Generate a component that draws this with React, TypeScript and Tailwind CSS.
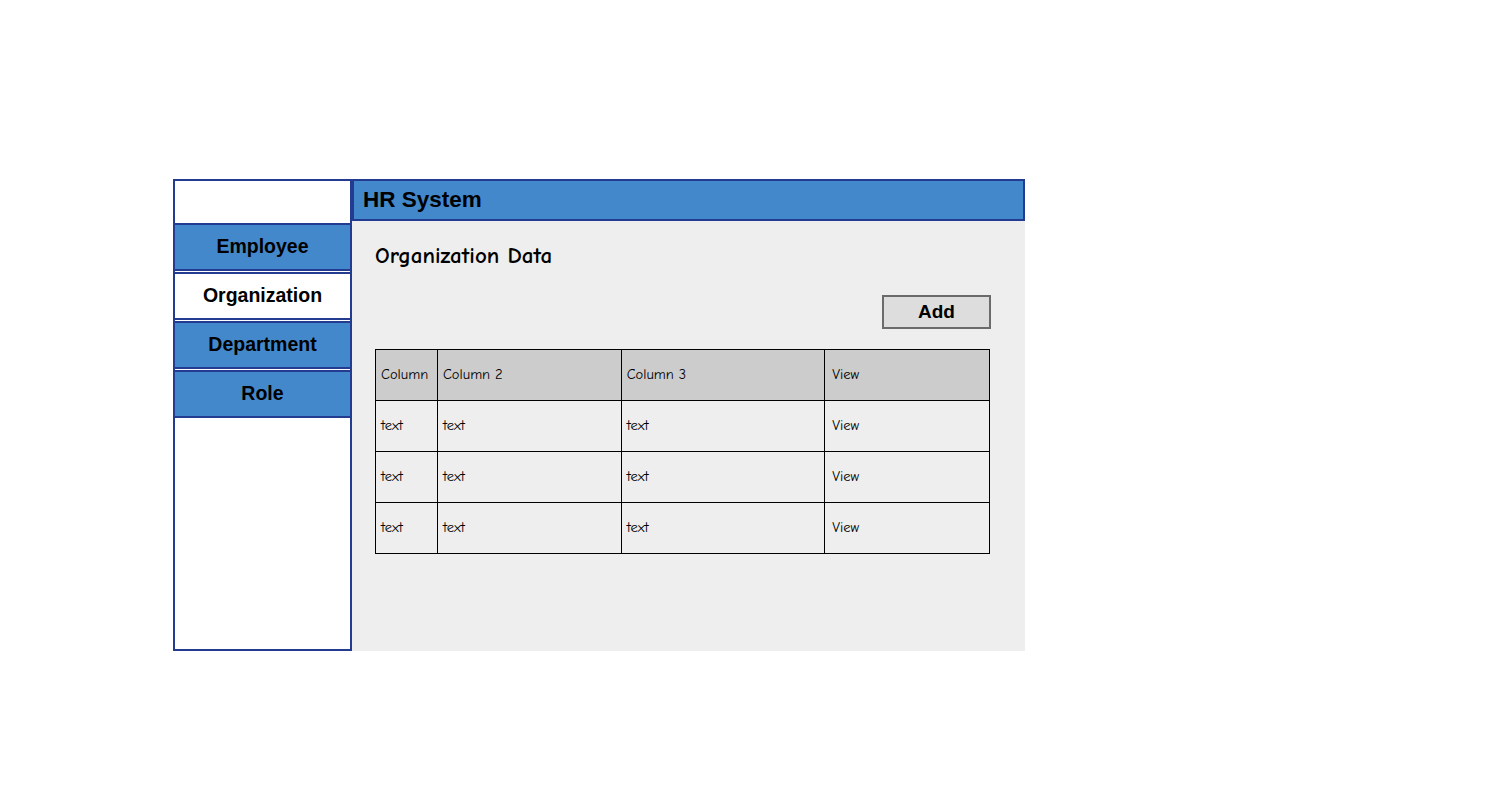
import React from 'react'

const navItems = [
  { label: 'Employee', active: false },
  { label: 'Organization', active: true },
  { label: 'Department', active: false },
  { label: 'Role', active: false },
]

const headers = ['Column', 'Column 2', 'Column 3', 'View']
const rows = [
  ['text', 'text', 'text', 'View'],
  ['text', 'text', 'text', 'View'],
  ['text', 'text', 'text', 'View'],
]

const colWidths = ['w-[62px]', 'w-[184px]', 'w-[204px]', 'w-[165px]']

const sketchFont = "font-['Comic_Sans_MS','Comic_Neue','DejaVu_Sans',sans-serif]"

export default function App() {
  return (
    <div className="w-[1500px] h-[790px] bg-white font-['Liberation_Sans',Arial,sans-serif] text-black">
      <div className="flex pt-[179px] pl-[173px]">
        {/* sidebar */}
        <div className="w-[179px] h-[472px] border-2 border-[#233c91] bg-white flex flex-col">
          <div className="h-[42px]" />
          {navItems.map((item) => (
            <div
              key={item.label}
              className={
                'h-[48px] mb-px -mx-[2px] border-2 border-[#233c91] flex items-center justify-center text-[19.5px] ' +
                (item.active ? 'bg-white font-semibold' : 'bg-[#4488cc] font-bold')
              }
            >
              {item.label}
            </div>
          ))}
        </div>

        {/* main */}
        <div className="w-[673px] flex flex-col">
          <div className="h-[42px] border-2 border-[#233c91] bg-[#4488cc] flex items-center pl-[9px] text-[22.5px] font-bold">
            HR System
          </div>
          <div className="h-[430px] bg-[#eeeeee] pl-[23px] pr-[34px]">
            <div className={`${sketchFont} pt-[22px] text-[23px] font-bold leading-[26px]`}>Organization Data</div>
            <div className="flex justify-end mt-[26px]">
              <button className="w-[109px] h-[34px] bg-[#dddddd] border-2 border-[#6b6b6b] text-[19px] font-bold">
                Add
              </button>
            </div>
            <table className={`${sketchFont} mt-[20px] border-collapse text-[14.5px] w-[615px]`}>
              <thead>
                <tr className="bg-[#cccccc] h-[51px]">
                  {headers.map((h, i) => (
                    <th
                      key={i}
                      className={`${colWidths[i]} border border-black text-left font-normal whitespace-nowrap ${i === 3 ? 'pl-[7px]' : 'pl-[5px]'}`}
                    >
                      {h}
                    </th>
                  ))}
                </tr>
              </thead>
              <tbody>
                {rows.map((r, ri) => (
                  <tr key={ri} className="h-[51px]">
                    {r.map((c, ci) => (
                      <td key={ci} className={`border border-black ${ci === 3 ? 'pl-[7px]' : 'pl-[5px]'}`}>
                        {c}
                      </td>
                    ))}
                  </tr>
                ))}
              </tbody>
            </table>
          </div>
        </div>
      </div>
    </div>
  )
}
